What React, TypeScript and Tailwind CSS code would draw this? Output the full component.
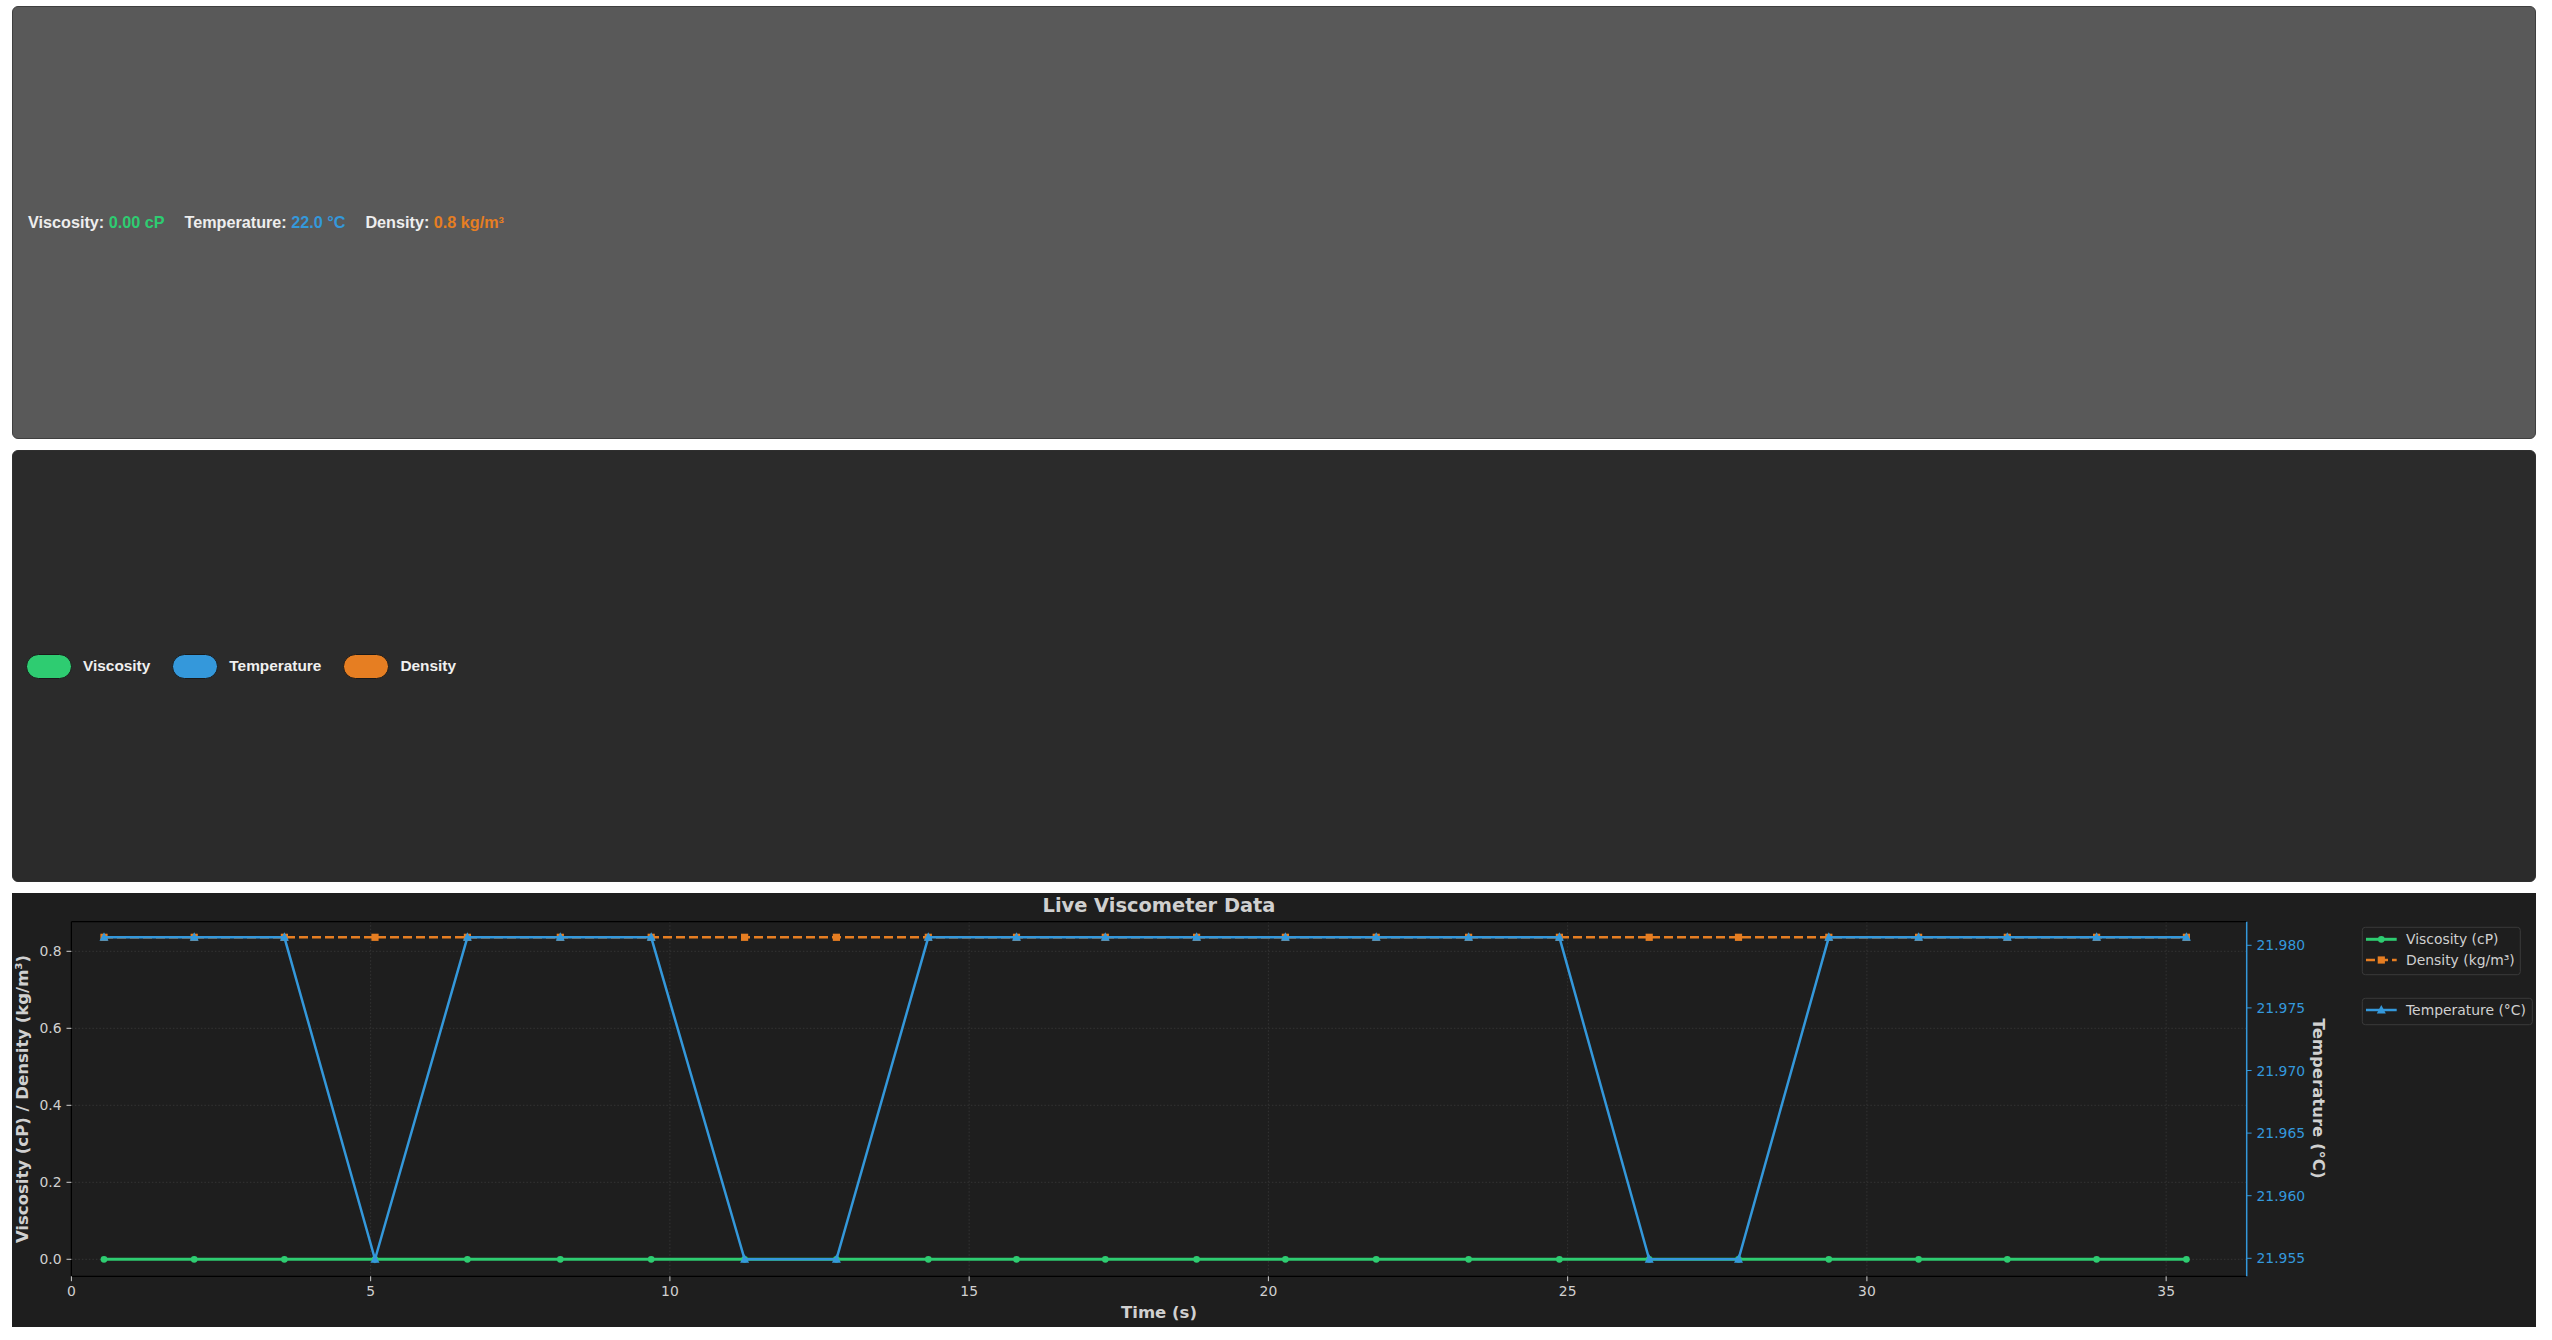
import React from "react";

const XS_ABS = [104, 194.2, 284.4, 375, 467.4, 560.3, 651.2, 744.6, 836.4, 928.3, 1016.5, 1105.3, 1196.6, 1285.4, 1376.2, 1468.6, 1559.4, 1649.2, 1738.5, 1828.8, 1918.6, 2007.3, 2096.6, 2186.4];
const XS = XS_ABS.map((x) => x - 12);
const LOW = new Set([3, 7, 8, 17, 18]);
const TOP = 44.3;
const BOT = 366.3;
const AX_L = 59.4;
const AX_R = 2234.7;
const AX_T = 28.7;
const AX_B = 383.3;
const XT = (t: number) => AX_L + t * 59.85;
const LEFT_TICKS = [
  { v: "0.0", y: 366.3 },
  { v: "0.2", y: 289.3 },
  { v: "0.4", y: 212.3 },
  { v: "0.6", y: 135.3 },
  { v: "0.8", y: 58.3 },
];
const RIGHT_TICKS = [
  { v: "21.955", y: 365.3 },
  { v: "21.960", y: 302.7 },
  { v: "21.965", y: 240.1 },
  { v: "21.970", y: 177.5 },
  { v: "21.975", y: 114.9 },
  { v: "21.980", y: 52.3 },
];
const GREEN = "#2ecc71";
const BLUE = "#3498db";
const ORANGE = "#e67e22";
const TXT = "#d0d0d0";

function tri(x: number, y: number) {
  return `${x},${y - 5} ${x - 4.5},${y + 3.5} ${x + 4.5},${y + 3.5}`;
}

function Chart() {
  const greenPts = XS.map((x) => `${x},${BOT}`).join(" ");
  const orangePts = XS.map((x) => `${x},${TOP}`).join(" ");
  const bluePts = XS.map((x, i) => `${x},${LOW.has(i) ? BOT : TOP}`).join(" ");
  return (
    <svg width={2524} height={434} viewBox="0 0 2524 434" style={{ fontFamily: "'DejaVu Sans', sans-serif" }}>
      {[5, 10, 15, 20, 25, 30, 35].map((t) => (
        <line key={"gx" + t} x1={XT(t)} x2={XT(t)} y1={AX_T} y2={AX_B} stroke="#3a3a3a" strokeWidth={0.8} strokeDasharray="1.5 2" />
      ))}
      {LEFT_TICKS.map((tk) => (
        <line key={"gy" + tk.v} x1={AX_L} x2={AX_R} y1={tk.y} y2={tk.y} stroke="#3a3a3a" strokeWidth={0.8} strokeDasharray="1.5 2" />
      ))}

      <polyline points={greenPts} fill="none" stroke={GREEN} strokeWidth={3} strokeLinejoin="round" />
      {XS.map((x, i) => (
        <circle key={"g" + i} cx={x} cy={BOT} r={3.4} fill={GREEN} />
      ))}
      <polyline points={orangePts} fill="none" stroke={ORANGE} strokeWidth={2.5} strokeDasharray="9 4" />
      {XS.map((x, i) => (
        <rect key={"o" + i} x={x - 3.6} y={TOP - 3.6} width={7.2} height={7.2} fill={ORANGE} />
      ))}
      <polyline points={bluePts} fill="none" stroke={BLUE} strokeWidth={2.5} strokeLinejoin="miter" />
      {XS.map((x, i) => (
        <polygon key={"b" + i} points={tri(x, LOW.has(i) ? BOT : TOP)} fill={BLUE} />
      ))}

      <line x1={AX_L} x2={AX_R} y1={AX_T} y2={AX_T} stroke="#000" strokeWidth={1.2} />
      <line x1={AX_L} x2={AX_R} y1={AX_B} y2={AX_B} stroke="#000" strokeWidth={1.2} />
      <line x1={AX_L} x2={AX_L} y1={AX_T} y2={AX_B} stroke="#000" strokeWidth={1.2} />
      <line x1={AX_R} x2={AX_R} y1={AX_T} y2={AX_B} stroke={BLUE} strokeWidth={1.5} />

      {[0, 5, 10, 15, 20, 25, 30, 35].map((t) => (
        <g key={"xt" + t}>
          <line x1={XT(t)} x2={XT(t)} y1={AX_B} y2={AX_B + 4.9} stroke={TXT} strokeWidth={1} />
          <text x={XT(t)} y={403} textAnchor="middle" fontSize={13.9} fill={TXT}>
            {t}
          </text>
        </g>
      ))}
      {LEFT_TICKS.map((tk) => (
        <g key={"lt" + tk.v}>
          <line x1={AX_L - 4.9} x2={AX_L} y1={tk.y} y2={tk.y} stroke={TXT} strokeWidth={1} />
          <text x={49.5} y={tk.y + 5} textAnchor="end" fontSize={13.9} fill={TXT}>
            {tk.v}
          </text>
        </g>
      ))}
      {RIGHT_TICKS.map((tk) => (
        <g key={"rt" + tk.v}>
          <line x1={AX_R} x2={AX_R + 4.9} y1={tk.y} y2={tk.y} stroke={BLUE} strokeWidth={1} />
          <text x={2244.5} y={tk.y + 5} textAnchor="start" fontSize={13.9} fill={BLUE}>
            {tk.v}
          </text>
        </g>
      ))}

      <text x={1147} y={19.3} textAnchor="middle" fontSize={19.4} fontWeight="bold" fill={TXT}>
        Live Viscometer Data
      </text>
      <text x={1147} y={425} textAnchor="middle" fontSize={16.5} fontWeight="bold" fill={TXT}>
        Time (s)
      </text>
      <text x={0} y={0} transform="translate(15.5 206) rotate(-90)" textAnchor="middle" fontSize={16.5} fontWeight="bold" fill={TXT}>
        Viscosity (cP) / Density (kg/m³)
      </text>
      <text x={0} y={0} transform="translate(2301 205.5) rotate(90)" textAnchor="middle" fontSize={16.5} fontWeight="bold" fill={TXT}>
        Temperature (°C)
      </text>

      <rect x={2350.3} y={34.3} width={158} height={47.4} rx={3} fill="#1e1e1e" stroke="#3a3a3a" strokeWidth={1} />
      <line x1={2354} x2={2384.7} y1={46.3} y2={46.3} stroke={GREEN} strokeWidth={3} />
      <circle cx={2369.3} cy={46.3} r={3.4} fill={GREEN} />
      <text x={2394} y={51.3} fontSize={13.9} fill={TXT}>
        Viscosity (cP)
      </text>
      <line x1={2354} x2={2384.7} y1={67} y2={67} stroke={ORANGE} strokeWidth={2.5} strokeDasharray="9 4" />
      <rect x={2365.7} y={63.4} width={7.2} height={7.2} fill={ORANGE} />
      <text x={2394} y={72} fontSize={13.9} fill={TXT}>
        Density (kg/m³)
      </text>

      <rect x={2350.3} y={105.3} width={170} height={26.4} rx={3} fill="#1e1e1e" stroke="#3a3a3a" strokeWidth={1} />
      <line x1={2354} x2={2384.7} y1={117} y2={117} stroke={BLUE} strokeWidth={2.5} />
      <polygon points={tri(2369.3, 117)} fill={BLUE} />
      <text x={2394} y={122} fontSize={13.9} fill={TXT}>
        Temperature (°C)
      </text>
    </svg>
  );
}

function Pill({ color, label }: { color: string; label: string }) {
  return (
    <div className="flex items-center gap-[11px]">
      <div className="w-[46px] h-[25px] rounded-full border border-[#1a1a1a]" style={{ backgroundColor: color }} />
      <span className="text-[15.4px] font-bold text-[#f0f0f0] leading-none">{label}</span>
    </div>
  );
}

export default function App() {
  return (
    <div
      className="min-h-screen bg-white pt-[6px] pl-[12px] flex flex-col gap-[11px]"
      style={{ fontFamily: "'Liberation Sans', Arial, sans-serif" }}
    >
      <div className="w-[2524px] h-[433px] bg-[#595959] border border-[#3f3f3f] rounded-[6px] flex items-center px-[15px] gap-[20px] text-[16.2px] font-bold text-[#eeeeee] leading-none">
        <span>
          Viscosity: <span className="text-[#2ecc71]">0.00 cP</span>
        </span>
        <span>
          Temperature: <span className="text-[#3498db]">22.0 °C</span>
        </span>
        <span>
          Density: <span className="text-[#e67e22]">0.8 kg/m³</span>
        </span>
      </div>
      <div className="w-[2524px] h-[432px] bg-[#2b2b2b] border border-[#2f2f2f] rounded-[6px] flex items-center pl-[13px] gap-[22px]">
        <Pill color="#2ecc71" label="Viscosity" />
        <Pill color="#3498db" label="Temperature" />
        <Pill color="#e67e22" label="Density" />
      </div>
      <div className="w-[2524px] h-[434px] bg-[#1e1e1e]">
        <Chart />
      </div>
    </div>
  );
}
